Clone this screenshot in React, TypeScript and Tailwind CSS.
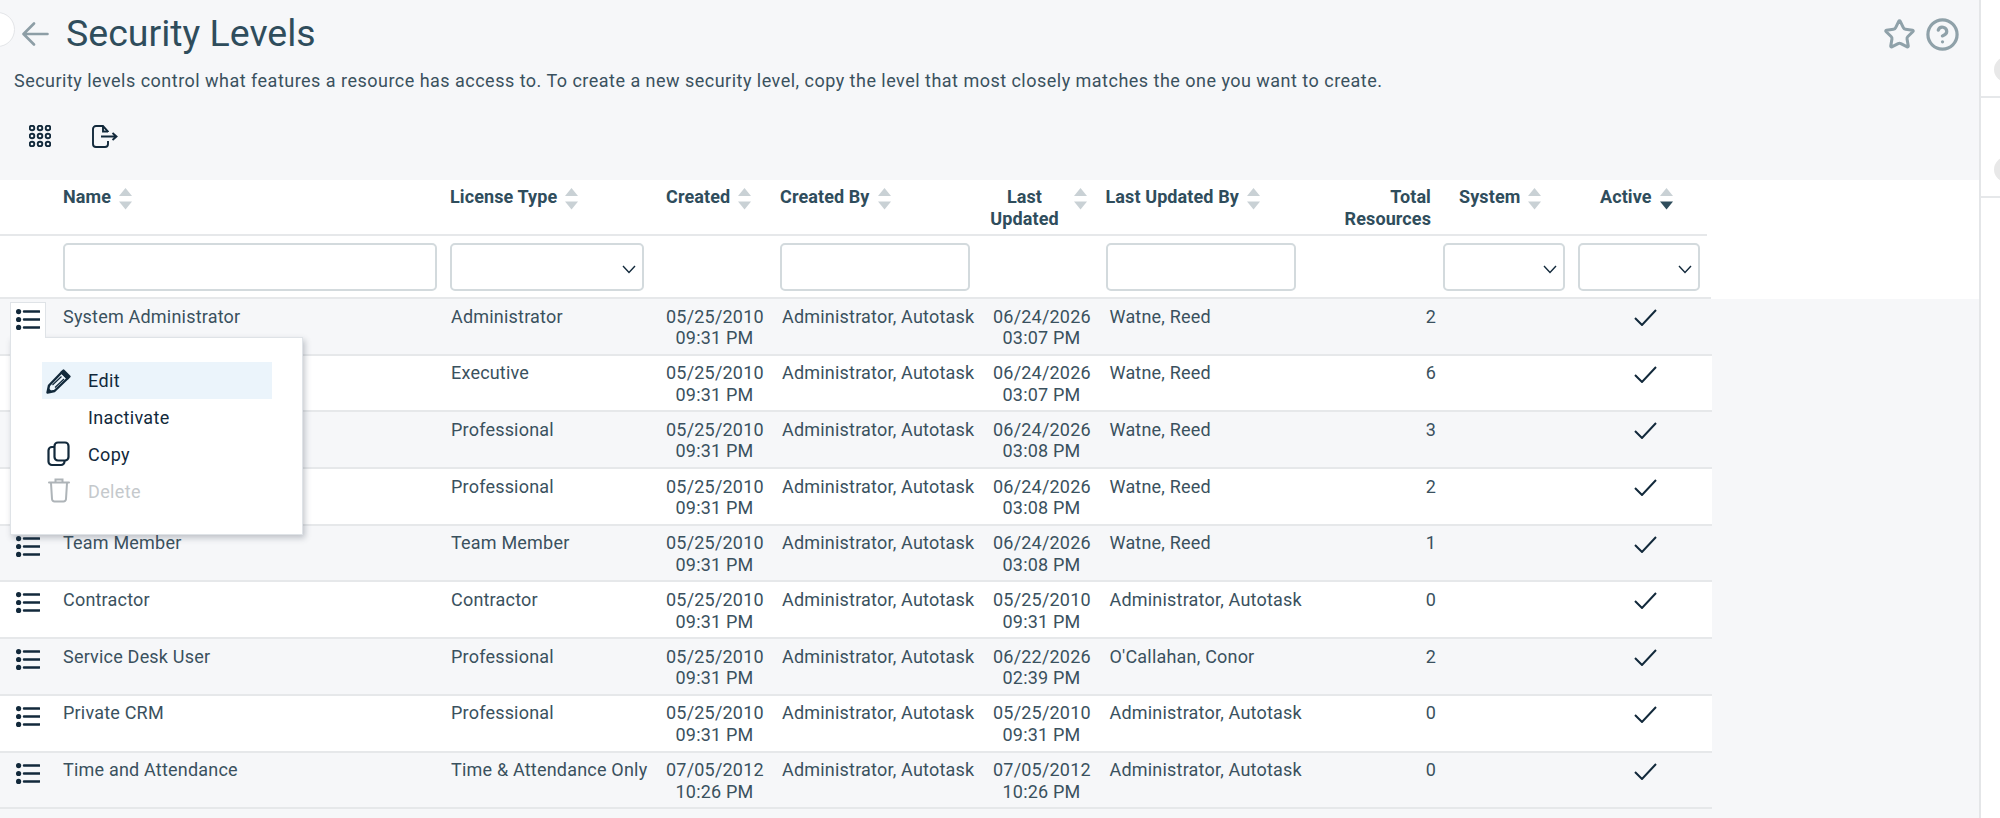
import { Star, CircleHelp } from 'lucide-react';

interface Level {
  name: string; license: string; created: string[];
  updated: string[]; updatedBy: string; total: number;
}

const LEVELS: Level[] = [
  { name: 'System Administrator', license: 'Administrator', created: ['05/25/2010', '09:31 PM'], updated: ['06/24/2026', '03:07 PM'], updatedBy: 'Watne, Reed', total: 2 },
  { name: '', license: 'Executive', created: ['05/25/2010', '09:31 PM'], updated: ['06/24/2026', '03:07 PM'], updatedBy: 'Watne, Reed', total: 6 },
  { name: '', license: 'Professional', created: ['05/25/2010', '09:31 PM'], updated: ['06/24/2026', '03:08 PM'], updatedBy: 'Watne, Reed', total: 3 },
  { name: '', license: 'Professional', created: ['05/25/2010', '09:31 PM'], updated: ['06/24/2026', '03:08 PM'], updatedBy: 'Watne, Reed', total: 2 },
  { name: 'Team Member', license: 'Team Member', created: ['05/25/2010', '09:31 PM'], updated: ['06/24/2026', '03:08 PM'], updatedBy: 'Watne, Reed', total: 1 },
  { name: 'Contractor', license: 'Contractor', created: ['05/25/2010', '09:31 PM'], updated: ['05/25/2010', '09:31 PM'], updatedBy: 'Administrator, Autotask', total: 0 },
  { name: 'Service Desk User', license: 'Professional', created: ['05/25/2010', '09:31 PM'], updated: ['06/22/2026', '02:39 PM'], updatedBy: "O'Callahan, Conor", total: 2 },
  { name: 'Private CRM', license: 'Professional', created: ['05/25/2010', '09:31 PM'], updated: ['05/25/2010', '09:31 PM'], updatedBy: 'Administrator, Autotask', total: 0 },
  { name: 'Time and Attendance', license: 'Time & Attendance Only', created: ['07/05/2012', '10:26 PM'], updated: ['07/05/2012', '10:26 PM'], updatedBy: 'Administrator, Autotask', total: 0 },
];

const ROW_COLS = 'grid-cols-[63px_388px_215px_116px_211px_116.500px_236.500px_90px_142px_134px]';

function SortIcon({ active = false }: { active?: boolean }) {
  return (
    <svg width="13" height="22" viewBox="0 0 13 22" className="shrink-0 mt-[2px]">
      <path d="M6.5 0 L13 8 H0 Z" fill="#c9d1d5" />
      <path d="M0 13.5 H13 L6.5 21.5 Z" fill={active ? '#2f4d5c' : '#c9d1d5'} />
    </svg>
  );
}

function ListIcon() {
  return (
    <svg width="24" height="21" viewBox="0 0 24 21" className="text-[#12293b]">
      <circle cx="2.6" cy="2.6" r="2.6" fill="currentColor" />
      <circle cx="2.6" cy="10.5" r="2.6" fill="currentColor" />
      <circle cx="2.6" cy="18.4" r="2.6" fill="currentColor" />
      <path d="M8 2.6 H23.500 M8 10.500 H23.500 M8 18.400 H23.500" stroke="currentColor" strokeWidth="2.500" strokeLinecap="round" />
    </svg>
  );
}

function Chevron() {
  return (
    <svg width="14" height="9" viewBox="0 0 14 9" fill="none" className="absolute right-[6px] top-[20px]">
      <path d="M1 1 L7 7.5 L13 1" stroke="#12293b" strokeWidth="1.4" />
    </svg>
  );
}

function FilterBox({ select = false }: { select?: boolean }) {
  return (
    <div className="relative h-[48px] rounded-[5px] border-2 border-[#d3dadd] bg-white">
      {select && <Chevron />}
    </div>
  );
}

function Dates({ lines }: { lines: string[] }) {
  return (
    <div className="w-[97px] text-center">
      <div>{lines[0]}</div>
      <div>{lines[1]}</div>
    </div>
  );
}

function RowActions() {
  return (
    <>
      {/* open tab over the first row's icon */}
      <div className="absolute left-[10px] top-[3px] z-20 flex h-[36px] w-[36px] items-start justify-start border border-b-0 border-[#dfe3e7] bg-white pl-[5px] pt-[6px]">
        <ListIcon />
      </div>
      <div className="absolute left-[10px] top-[38px] z-10 w-[293px] border border-[#dfe3e7] bg-white px-[31px] py-[24px] text-[18px] leading-[37px] tracking-[0.35px] text-[#12293b] shadow-[2px_3px_6px_rgba(60,70,85,0.3)]">
        <div className="relative h-[37px] w-[230px] bg-[#ebf4fb] pl-[46px]">
          <svg width="26" height="26" viewBox="0 0 26 26" className="absolute left-[4px] top-[6px]">
            <path d="M17.5 2.5 L23.5 8.5 L21.8 10.2 L15.8 4.2 Z" fill="#12293b" stroke="#12293b" strokeWidth="2.400" strokeLinejoin="round" />
            <path d="M15.5 4.5 L21.5 10.5 L8.5 23 L1.5 24.5 L3 17.5 Z" fill="none" stroke="#12293b" strokeWidth="2.400" strokeLinejoin="round" />
            <path d="M6.5 17 L15.5 8.5 M9 19.5 L18 11" stroke="#12293b" strokeWidth="1.200" />
            <path d="M1.5 24.5 L2.5 20 L6 23.5 Z" fill="#12293b" />
          </svg>
          Edit
        </div>
        <div className="h-[37px] pl-[46px]">Inactivate</div>
        <div className="relative h-[37px] pl-[46px]">
          <svg width="24" height="26" viewBox="0 0 24 26" fill="none" className="absolute left-[5px] top-[5px]" stroke="#12293b" strokeWidth="2.200">
            <rect x="7.5" y="1.5" width="14" height="18" rx="3.5" />
            <path d="M7.5 6 H5 A3.5 3.5 0 0 0 1.5 9.500 V20.500 A3.5 3.5 0 0 0 5 24 H14 A3.5 3.5 0 0 0 17.500 20.500 V19.500" />
          </svg>
          Copy
        </div>
        <div className="relative h-[37px] pl-[46px] text-[#c5c9cc]">
          <svg width="22" height="25" viewBox="0 0 22 25" fill="none" className="absolute left-[6px] top-[5px]" stroke="#aeb4b8" strokeWidth="2" strokeLinecap="round">
            <path d="M1 4.500 H21 M7.500 4 V1.500 H14.500 V4" />
            <path d="M3 5 L4 21 A2.500 2.500 0 0 0 6.500 23.500 H15.500 A2.500 2.500 0 0 0 18 21 L19 5" />
          </svg>
          Delete
        </div>
      </div>
    </>
  );
}

export default function App() {
  return (
    <div className="flex h-[818px] w-[2000px] overflow-hidden bg-white font-['Roboto',sans-serif] text-[18px] leading-[21.6px] tracking-[0.2px] text-[#3a515e]">
      <div className="relative w-[1981px] shrink-0 overflow-hidden border-r-2 border-[#e4e6e8] bg-[#f6f7f9]">
        {/* collapsed nav handle */}
        <div className="absolute left-[-20px] top-[12px] h-[35px] w-[35px] rounded-full border border-[#e3e5e8] bg-white">
          <div className="absolute right-[14px] top-[7px] h-[2px] w-[2px] bg-[#9aa4aa]" />
          <div className="absolute right-[14px] top-[23px] h-[2px] w-[2px] bg-[#9aa4aa]" />
        </div>

        {/* Header */}
        <div className="h-[180px]">
          <div className="flex h-[68px] items-center pl-[22px] pr-[19px]">
            <svg width="27" height="24" viewBox="0 0 27 24" fill="none" stroke="#8d9ea6" strokeWidth="2.600" strokeLinecap="round" strokeLinejoin="round">
              <path d="M25.500 12 H2 M12 1.500 L1.500 12 L12 22.500" />
            </svg>
            <h1 className="ml-[17px] text-[37.500px] leading-none font-normal tracking-normal text-[#2f4d5c]">Security Levels</h1>
            <Star size={33} strokeWidth={2.200} className="ml-auto text-[#8fa1a9]" />
            <CircleHelp size={35} strokeWidth={2.200} className="ml-[9px] text-[#8fa1a9]" />
          </div>
          <p className="mt-[2px] pl-[14px] tracking-[0.48px] text-[#3a515e]">
            Security levels control what features a resource has access to. To create a new security level, copy the level that most closely matches the one you want to create.
          </p>
          <div className="mt-[33px] flex items-center pl-[29px]">
            <svg width="22" height="22" viewBox="0 0 22 22" fill="none" stroke="#12293b" strokeWidth="1.900">
              {[3, 11, 19].map(y => [3, 11, 19].map(x => (
                <circle key={`${x}-${y}`} cx={x} cy={y} r="2.300" />
              )))}
            </svg>
            <svg width="26" height="23" viewBox="0 0 26 23" fill="none" stroke="#12293b" strokeWidth="1.900" className="ml-[41px]">
              <path d="M16 7 V6.500 L11 1 H4 A3 3 0 0 0 1 4 V19 A3 3 0 0 0 4 22 H13 A3 3 0 0 0 16 19 V16" />
              <path d="M11 1 V6.500 H16" />
              <path d="M9 11.500 H24 M20.500 8 L24.500 11.500 L20.500 15" />
            </svg>
          </div>
        </div>

        {/* Column headings and filters */}
        <div className="bg-white font-bold tracking-[0.1px] text-[#2f4d5c]">
          <div className="grid h-[56px] w-[1707px] grid-cols-[63px_387px_216px_114px_210px_115.500px_238.500px_87px_148px_128.500px] border-b-2 border-[#e6e8ea] pt-[6px]">
            <div />
            <div className="flex gap-[8px]">Name <SortIcon /></div>
            <div className="flex gap-[8px]">License Type <SortIcon /></div>
            <div className="flex gap-[8px]">Created <SortIcon /></div>
            <div className="flex gap-[8px]">Created By <SortIcon /></div>
            <div className="flex gap-[15px]"><div className="w-[69px] text-center">Last Updated</div><SortIcon /></div>
            <div className="flex gap-[8px]">Last Updated By <SortIcon /></div>
            <div className="text-right">Total Resources</div>
            <div className="flex gap-[8px] pl-[28px]">System <SortIcon /></div>
            <div className="flex gap-[8px] pl-[21px]">Active <SortIcon active /></div>
          </div>
          <div className="grid h-[63px] w-[1711px] grid-cols-[63px_374px_13px_194px_136px_190px_135.500px_190px_147.500px_122px_13px_122px] border-b-2 border-[#e6e8ea] pt-[7px]">
            <div />
            <FilterBox />
            <div />
            <FilterBox select />
            <div />
            <FilterBox />
            <div />
            <FilterBox />
            <div />
            <FilterBox select />
            <div />
            <FilterBox select />
          </div>
        </div>

        {/* Rows */}
        <div className="relative w-[1712px]">
          <RowActions />
          {LEVELS.map((l, i) => (
            <div key={i} className={`grid h-[56.700px] border-b-2 border-[#e6e8ea] pt-[6.500px] ${ROW_COLS} ${i % 2 ? 'bg-white' : 'bg-[#f6f7f9]'}`}>
              <div className="pl-[15.500px] pt-[3.500px]"><ListIcon /></div>
              <div>{l.name}</div>
              <div className="whitespace-nowrap">{l.license}</div>
              <Dates lines={l.created} />
              <div className="whitespace-nowrap">Administrator, Autotask</div>
              <Dates lines={l.updated} />
              <div className="whitespace-nowrap">{l.updatedBy}</div>
              <div className="text-right">{l.total}</div>
              <div />
              <div className="flex justify-center pt-[3.500px]">
                <svg width="23" height="17" viewBox="0 0 23 17" fill="none">
                  <path d="M1 9 L8 16 L22 1" stroke="#12293b" strokeWidth="2" />
                </svg>
              </div>
            </div>
          ))}
        </div>
      </div>

      {/* Right rail, mostly off-screen */}
      <div className="flex-1 overflow-hidden">
        <div className="h-[98px] border-b-2 border-[#e6e8ea] pl-[13px] pt-[57px]">
          <div className="h-[25px] w-[25px] rounded-full bg-[#e8e8e8]" />
        </div>
        <div className="h-[100px] border-b-2 border-[#e6e8ea] pl-[13px] pt-[59px]">
          <div className="h-[25px] w-[25px] rounded-full bg-[#e8e8e8]" />
        </div>
      </div>
    </div>
  );
}
